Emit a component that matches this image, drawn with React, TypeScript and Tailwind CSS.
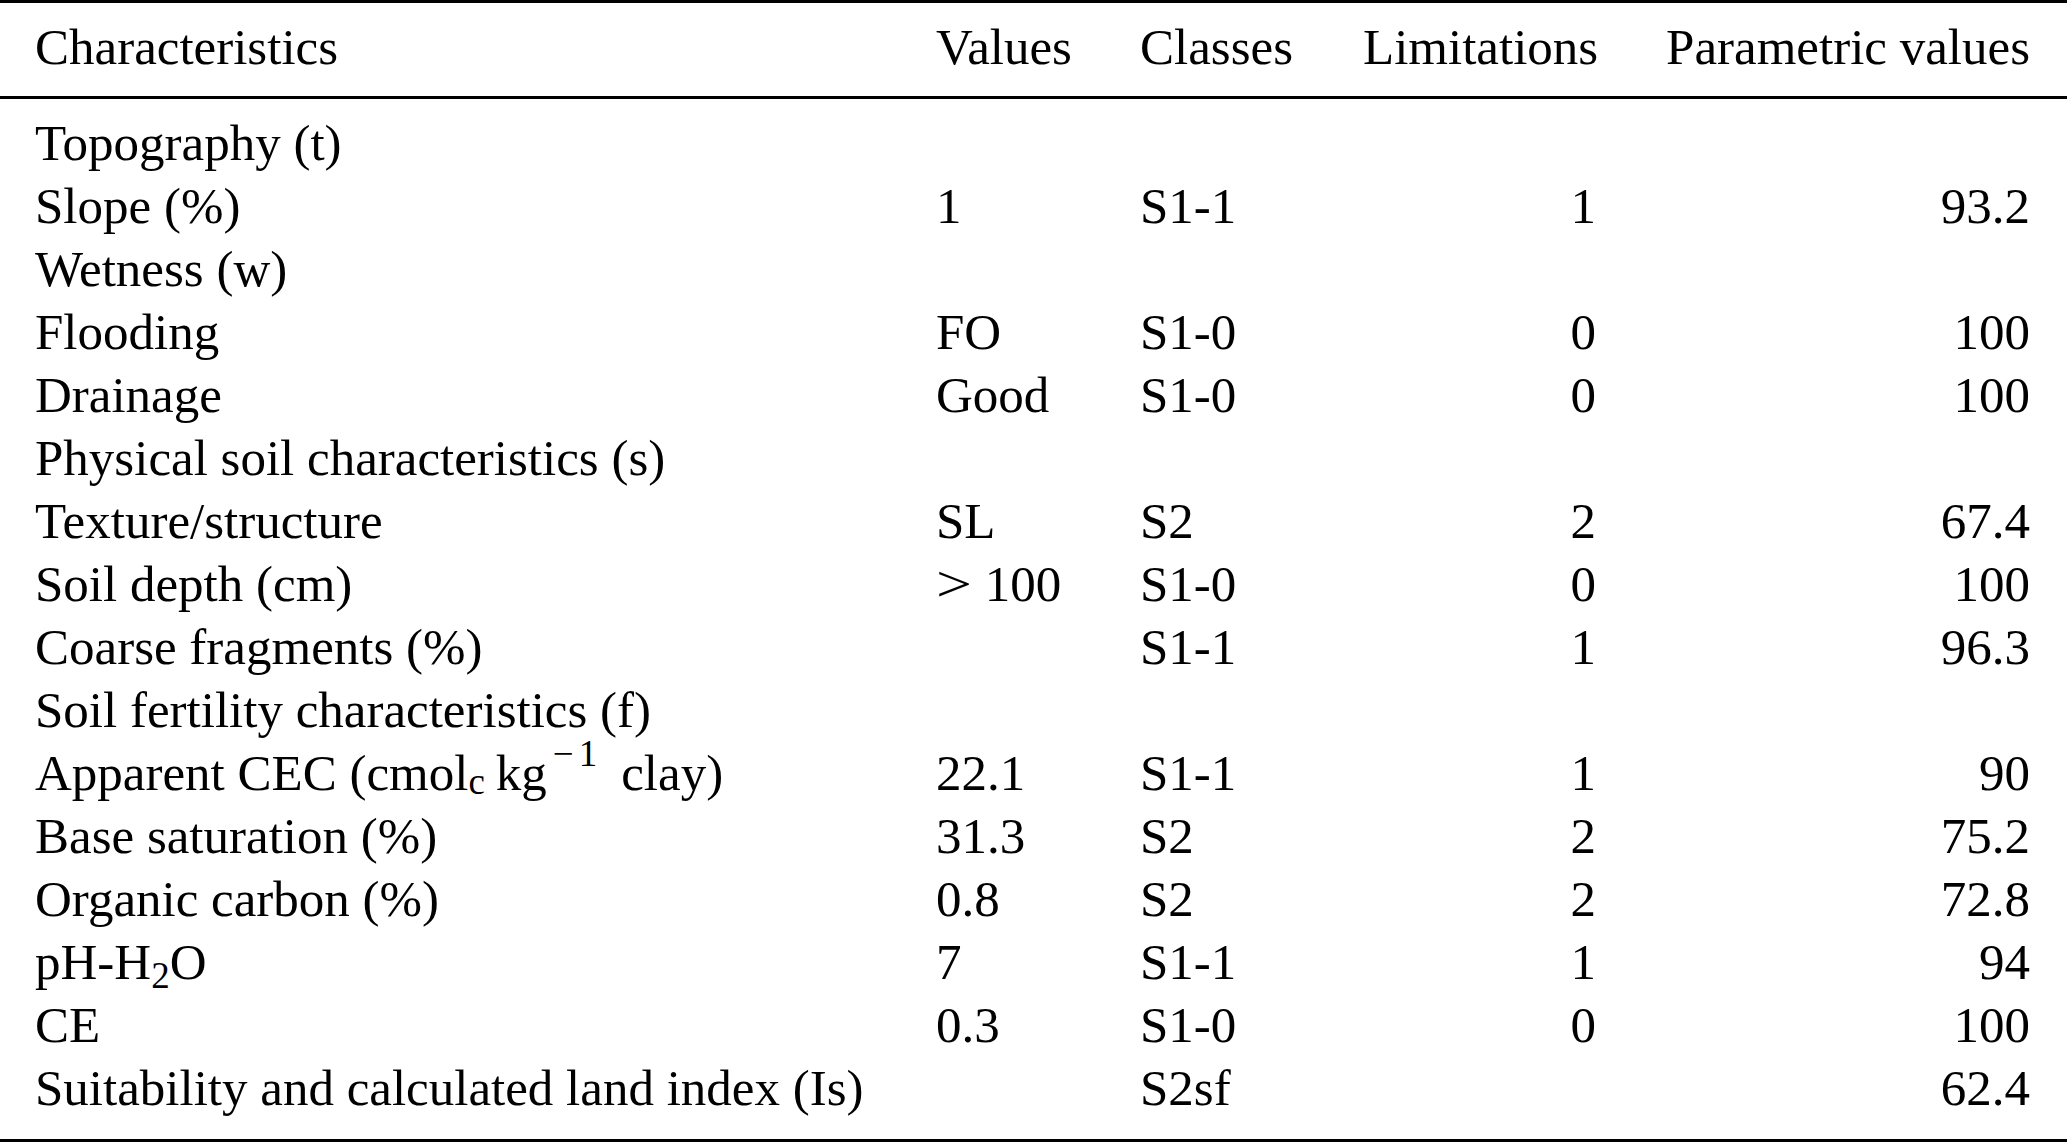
import React from "react";

type Row = {
  c: React.ReactNode;
  v?: React.ReactNode;
  k?: string;
  l?: string;
  p?: string;
};

const rows: Row[] = [
  { c: "Topography (t)" },
  { c: "Slope (%)", v: "1", k: "S1-1", l: "1", p: "93.2" },
  { c: "Wetness (w)" },
  { c: "Flooding", v: "FO", k: "S1-0", l: "0", p: "100" },
  { c: "Drainage", v: "Good", k: "S1-0", l: "0", p: "100" },
  { c: "Physical soil characteristics (s)" },
  { c: "Texture/structure", v: "SL", k: "S2", l: "2", p: "67.4" },
  {
    c: "Soil depth (cm)",
    v: (
      <span>
        <span className="inline-block scale-x-[1.25] origin-left mr-[20px]">&gt;</span>100
      </span>
    ),
    k: "S1-0",
    l: "0",
    p: "100",
  },
  { c: "Coarse fragments (%)", k: "S1-1", l: "1", p: "96.3" },
  { c: "Soil fertility characteristics (f)" },
  {
    c: (
      <span>
        Apparent CEC (cmol
        <span className="text-[37px] leading-[0px] align-[-4px]">c</span>
        <span className="inline-block w-[11px]" />
        kg
        <span className="inline-block w-[6px]" />
        <span className="text-[37px] leading-[0px] align-[24px]">
          {"\u2212"}
          <span className="ml-[5px]">1</span>
        </span>
        <span className="inline-block w-[24px]" />
        clay)
      </span>
    ),
    v: "22.1",
    k: "S1-1",
    l: "1",
    p: "90",
  },
  { c: "Base saturation (%)", v: "31.3", k: "S2", l: "2", p: "75.2" },
  { c: "Organic carbon (%)", v: "0.8", k: "S2", l: "2", p: "72.8" },
  {
    c: (
      <span>
        pH-H<span className="text-[37px] leading-[0px] align-[-9px]">2</span>O
      </span>
    ),
    v: "7",
    k: "S1-1",
    l: "1",
    p: "94",
  },
  { c: "CE", v: "0.3", k: "S1-0", l: "0", p: "100" },
  { c: "Suitability and calculated land index (Is)", k: "S2sf", p: "62.4" },
];

const grid =
  "grid grid-cols-[901px_204px_223px_233px_1fr] pl-[35px] pr-[37px] whitespace-nowrap";

export default function App() {
  return (
    <div
      className="w-[2067px] h-[1143px] bg-white text-black text-[51px] leading-[63px]"
      style={{ fontFamily: '"Liberation Serif", "Times New Roman", serif' }}
    >
      <div className="border-t-[3px] border-black" />
      <div className={`${grid} h-[93px] items-center pb-[5px]`}>
        <div>Characteristics</div>
        <div>Values</div>
        <div>Classes</div>
        <div className="text-right">Limitations</div>
        <div className="text-right">Parametric values</div>
      </div>
      <div className="border-t-[3px] border-black" />
      <div className="pt-[13px] pb-[19px]">
        {rows.map((r, i) => (
          <div key={i} className={`${grid} h-[63px] items-center`}>
            <div>{r.c}</div>
            <div>{r.v}</div>
            <div>{r.k}</div>
            <div className="text-right">{r.l}</div>
            <div className="text-right">{r.p}</div>
          </div>
        ))}
      </div>
      <div className="border-t-[3px] border-black" />
    </div>
  );
}
